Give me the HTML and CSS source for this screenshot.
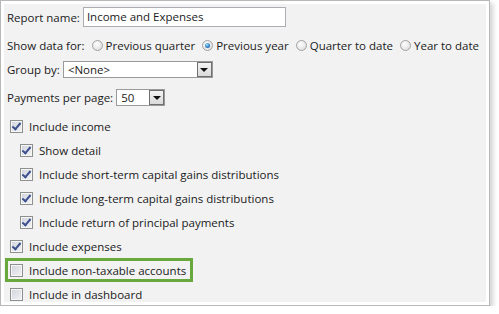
FILE: index.html
```html
<!DOCTYPE html>
<html lang="en">
<head>
    <meta charset="UTF-8">
    <title>Report settings</title>
    <link rel="stylesheet" href="styles.css">
</head>
<body>

<div class="window">
    <div class="content">

        <div class="row row-name">
            <span class="label">Report name:</span>
            <span class="textbox">Income and Expenses</span>
        </div>

        <div class="row row-show">
            <span class="label">Show data for:</span>
            <span class="radio"></span><span class="radio-text">Previous quarter</span>
            <span class="radio on"></span><span class="radio-text">Previous year</span>
            <span class="radio"></span><span class="radio-text">Quarter to date</span>
            <span class="radio"></span><span class="radio-text">Year to date</span>
        </div>

        <div class="row row-group">
            <span class="label">Group by:</span>
            <span class="select select-group">
                <span class="select-value">&lt;None&gt;</span>
                <span class="select-btn"><span class="arrow"></span></span>
            </span>
        </div>

        <div class="row row-pages">
            <span class="label">Payments per page:</span>
            <span class="select select-pages">
                <span class="select-value">50</span>
                <span class="select-btn"><span class="arrow"></span></span>
            </span>
        </div>

        <div class="checks">
            <div class="check-row">
                <span class="box checked"></span><span>Include income</span>
            </div>
            <div class="check-row sub">
                <span class="box checked"></span><span>Show detail</span>
            </div>
            <div class="check-row sub">
                <span class="box checked"></span><span>Include short-term capital gains distributions</span>
            </div>
            <div class="check-row sub">
                <span class="box checked"></span><span>Include long-term capital gains distributions</span>
            </div>
            <div class="check-row sub">
                <span class="box checked"></span><span>Include return of principal payments</span>
            </div>
            <div class="check-row">
                <span class="box checked"></span><span>Include expenses</span>
            </div>
            <div class="check-row highlight">
                <span class="box"></span><span>Include non-taxable accounts</span>
            </div>
            <div class="check-row">
                <span class="box"></span><span>Include in dashboard</span>
            </div>
        </div>

    </div>
</div>

</body>
</html>
```

FILE: styles.css
```css
body {
    margin: 0;
    background: #fff;
    font-family: "Open Sans", "Liberation Sans", sans-serif;
    font-size: 11.5px;
    color: #1b1b1b;
}

.window {
    box-sizing: border-box;
    width: 490px;
    height: 306px;
    border: 1px solid #b8b8b8;
    padding: 3px;
    background: #fff;
    box-shadow: 3px 3px 5px rgba(0, 0, 0, 0.18);
}

.content {
    height: 100%;
    box-sizing: border-box;
    background: #f2f2f2;
    padding: 3px 3px 0;
    overflow: hidden;
}

.row {
    display: flex;
    align-items: center;
    white-space: nowrap;
}

.row > span {
    flex-shrink: 0;
}

.label {
    margin-right: 3px;
}

.row-name {
    height: 20px;
}

.row-show {
    height: 18px;
    margin-top: 9px;
}

.row-group {
    height: 17px;
    margin-top: 7px;
}

.row-pages {
    height: 17px;
    margin-top: 11px;
}

.textbox {
    box-sizing: border-box;
    width: 203px;
    height: 20px;
    border: 1px solid #abadb3;
    background: #fff;
    padding: 0 3px;
    line-height: 18px;
}

/* radio buttons */
.radio {
    box-sizing: border-box;
    width: 11px;
    height: 11px;
    border-radius: 50%;
    border: 1px solid #a2a2a2;
    background: radial-gradient(circle at 40% 35%, #fdfdfd, #d8d8d8);
    margin: 0 3px 0 4px;
    position: relative;
}

.radio.on::after {
    content: "";
    position: absolute;
    left: 2px;
    top: 2px;
    width: 5px;
    height: 5px;
    border-radius: 50%;
    background: radial-gradient(circle at 40% 35%, #9fe0ff, #1f69b5 70%, #1b4f8a);
}

.radio-text {
    margin-right: 3px;
}

/* dropdowns */
.select {
    box-sizing: border-box;
    height: 17px;
    border: 1px solid #9a9a9a;
    background: #fff;
    display: flex;
    align-items: center;
    justify-content: space-between;
    padding-left: 4px;
}

.select-group {
    width: 150px;
}

.select-pages {
    width: 49px;
}

.select-btn {
    box-sizing: border-box;
    width: 15px;
    height: 15px;
    border: 1px solid #6f6f6f;
    background: linear-gradient(#f4f4f4, #dadada);
    display: flex;
    align-items: center;
    justify-content: center;
}

.arrow {
    width: 0;
    height: 0;
    border-left: 4px solid transparent;
    border-right: 4px solid transparent;
    border-top: 4px solid #111;
    margin-top: 1px;
}

/* checkboxes */
.checks {
    margin-top: 8px;
    white-space: nowrap;
}

.check-row {
    display: flex;
    align-items: center;
    height: 24px;
    padding-left: 3px;
}

.check-row.sub {
    padding-left: 13px;
}

.check-row.highlight {
    width: 188px;
    box-sizing: border-box;
    margin-left: -2px;
    padding-left: 5px;
    box-shadow: inset 0 0 0 3px #69a83c;
}

.box {
    box-sizing: border-box;
    flex-shrink: 0;
    width: 13px;
    height: 13px;
    border: 1px solid #8e8f8f;
    background: linear-gradient(135deg, #cfd3da, #f3f4f6);
    box-shadow: inset 0 0 0 1px #f6f6f6;
    margin-right: 6px;
    position: relative;
}

.box.checked::after {
    content: "";
    position: absolute;
    left: 3px;
    top: 0px;
    width: 3px;
    height: 7px;
    border-right: 2px solid #3d4f8e;
    border-bottom: 2px solid #3d4f8e;
    transform: rotate(40deg);
}
```
